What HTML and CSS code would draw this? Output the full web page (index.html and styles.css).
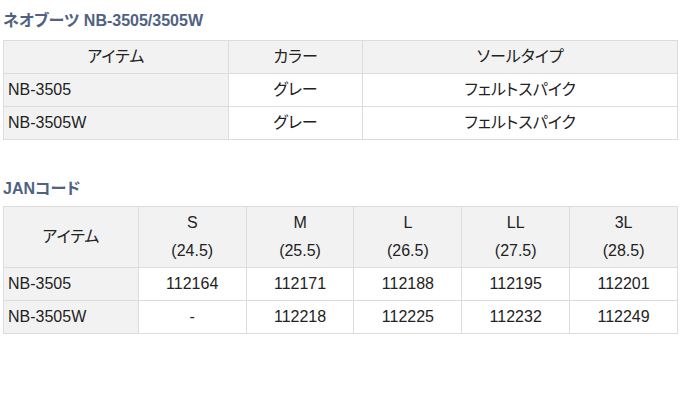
FILE: index.html
```html
<!DOCTYPE html>
<html lang="ja">
<head>
<meta charset="utf-8">
<title>ネオブーツ NB-3505/3505W</title>
<link rel="stylesheet" href="styles.css">
</head>
<body>
<section class="block">
  <h2 class="heading">ネオブーツ NB-3505/3505W</h2>
  <table class="spec">
    <colgroup>
      <col class="c-item1">
      <col class="c-color">
      <col class="c-sole">
    </colgroup>
    <thead>
      <tr><th>アイテム</th><th>カラー</th><th>ソールタイプ</th></tr>
    </thead>
    <tbody>
      <tr><th class="row-head">NB-3505</th><td>グレー</td><td>フェルトスパイク</td></tr>
      <tr><th class="row-head">NB-3505W</th><td>グレー</td><td>フェルトスパイク</td></tr>
    </tbody>
  </table>
</section>
<section class="block block-jan">
  <h2 class="heading">JANコード</h2>
  <table class="spec">
    <colgroup>
      <col class="c-item2">
      <col class="c-size"><col class="c-size"><col class="c-size"><col class="c-size"><col class="c-size">
    </colgroup>
    <thead>
      <tr>
        <th>アイテム</th>
        <th>S<br>(24.5)</th>
        <th>M<br>(25.5)</th>
        <th>L<br>(26.5)</th>
        <th>LL<br>(27.5)</th>
        <th>3L<br>(28.5)</th>
      </tr>
    </thead>
    <tbody>
      <tr><th class="row-head">NB-3505</th><td>112164</td><td>112171</td><td>112188</td><td>112195</td><td>112201</td></tr>
      <tr><th class="row-head">NB-3505W</th><td>-</td><td>112218</td><td>112225</td><td>112232</td><td>112249</td></tr>
    </tbody>
  </table>
</section>
</body>
</html>
```
FILE: styles.css
```css
html, body {
  margin: 0;
  padding: 0;
  background: #fff;
}
body {
  padding: 0 0 0 3px;
  font-family: "Liberation Sans", "Noto Sans CJK JP", sans-serif;
  font-feature-settings: "palt";
  color: #222;
}
.block {
  display: block;
}
.heading {
  margin: 9px 0 7px 0;
  font-size: 16px;
  line-height: 24px;
  font-weight: bold;
  color: #4f6282;
}
.block-jan {
  margin-top: 37px;
}
.block-jan .heading {
  margin-top: 0;
  margin-bottom: 5px;
}
.spec {
  width: 675px;
  border-collapse: collapse;
  table-layout: fixed;
  font-size: 16px;
  line-height: 28px;
}
.spec th,
.spec td {
  border: 1px solid #dcdcdc;
  padding: 2px 4px;
  font-weight: normal;
  text-align: center;
  vertical-align: middle;
}
.spec thead th {
  background: #f2f2f2;
}
.spec .row-head {
  background: #f2f2f2;
  text-align: left;
}
.c-item1 { width: 33.333%; }
.c-color { width: 20%; }
.c-sole { width: 46.667%; }
.c-item2 { width: 20%; }
.c-size { width: 16%; }
```
